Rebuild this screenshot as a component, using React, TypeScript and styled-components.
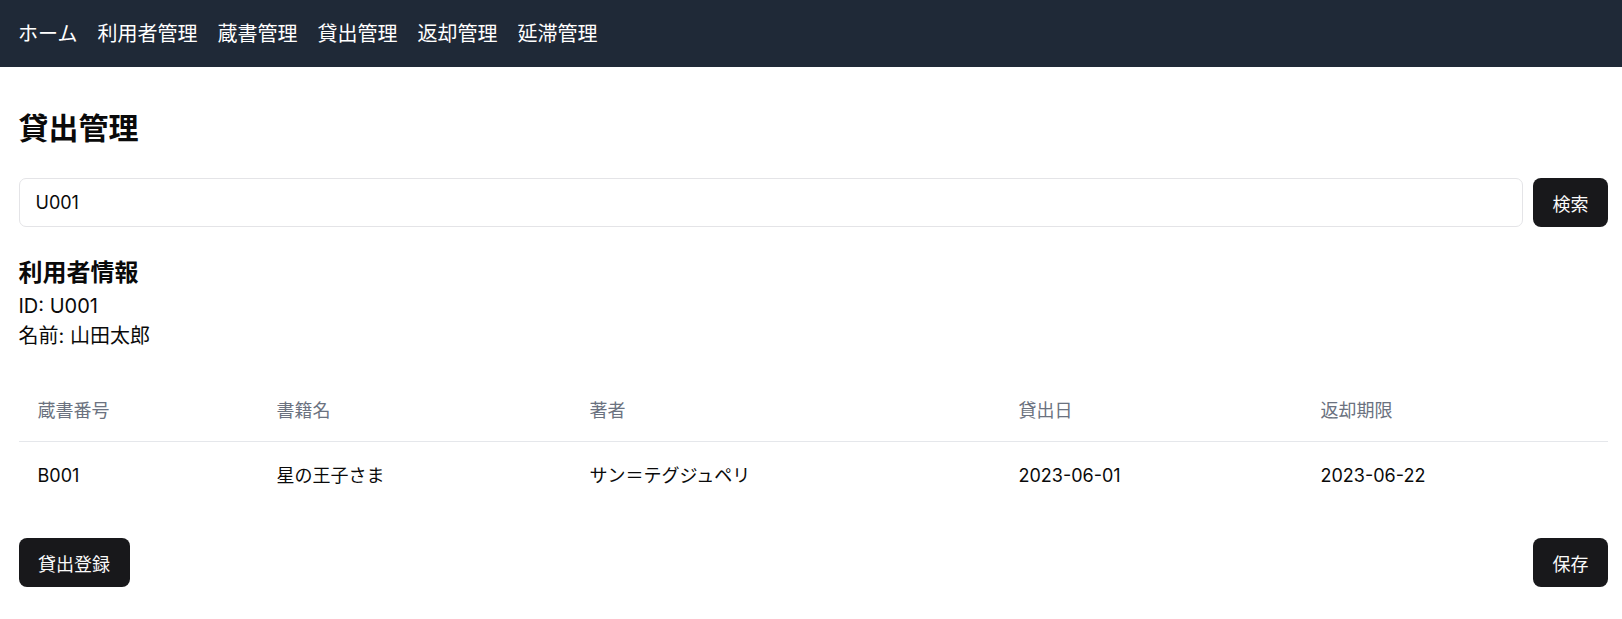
import React from "react";
import styled, { createGlobalStyle } from "styled-components";

const GlobalStyle = createGlobalStyle`
  * { box-sizing: border-box; }
  html, body { margin: 0; padding: 0; background: #ffffff; }
  body {
    font-family: Inter, "Noto Sans CJK JP", "Noto Sans", sans-serif;
    color: #0a0a0a;
    font-size: 18px;
  }
`;

const Header = styled.header`
  height: 67px;
  background: #1f2937;
  display: flex;
  align-items: center;
  padding: 0 14px 0 18px;
`;

const Nav = styled.nav`
  display: flex;
  gap: 20px;
`;

const NavLink = styled.a`
  color: #ffffff;
  font-size: 20px;
  line-height: 28px;
  text-decoration: none;
  cursor: pointer;
`;

const Main = styled.main`
  padding: 43px 14px 30px 18.5px;
  display: flex;
  flex-direction: column;
`;

const Title = styled.h1`
  margin: 0;
  font-size: 30px;
  line-height: 36px;
  font-weight: 700;
`;

const SearchRow = styled.div`
  margin-top: 32px;
  display: flex;
  gap: 10px;
`;

const Input = styled.input`
  flex: 1;
  height: 49px;
  border: 1px solid #e4e4e7;
  border-radius: 7px;
  padding: 0 16px;
  font-family: inherit;
  font-size: 18px;
  color: #0a0a0a;
  outline: none;
  background: #fff;
`;

const Button = styled.button`
  height: 49px;
  padding: 0 19.5px;
  border: none;
  border-radius: 8px;
  background: #18181b;
  color: #fafafa;
  font-family: inherit;
  font-size: 18px;
  cursor: pointer;
  white-space: nowrap;
`;

const Section = styled.section`
  margin-top: 28px;
`;

const SubTitle = styled.h2`
  margin: 0;
  font-size: 24px;
  line-height: 36px;
  font-weight: 700;
`;

const InfoLine = styled.p`
  margin: 0;
  font-size: 20px;
  line-height: 30px;
`;

const Table = styled.table`
  margin-top: 30px;
  width: 100%;
  border-collapse: collapse;
  table-layout: fixed;
`;

const Th = styled.th`
  text-align: left;
  font-weight: 400;
  color: #6b7280;
  font-size: 18px;
  line-height: 30px;
  padding: 15px 19px;
  border-bottom: 1px solid #e5e7eb;
`;

const Td = styled.td`
  font-size: 18px;
  line-height: 30px;
  padding: 19px 19px;
  color: #0a0a0a;
`;

const Actions = styled.div`
  margin-top: 28px;
  display: flex;
  justify-content: space-between;
`;

const navItems = ["ホーム", "利用者管理", "蔵書管理", "貸出管理", "返却管理", "延滞管理"];

const columns = [
  { label: "蔵書番号", width: 239 },
  { label: "書籍名", width: 313 },
  { label: "著者", width: 429 },
  { label: "貸出日", width: 302 },
  { label: "返却期限", width: undefined as number | undefined },
];

const loans = [
  {
    id: "B001",
    title: "星の王子さま",
    author: "サン＝テグジュペリ",
    loanDate: "2023-06-01",
    dueDate: "2023-06-22",
  },
];

export default function App() {
  return (
    <>
      <GlobalStyle />
      <Header>
        <Nav>
          {navItems.map((n) => (
            <NavLink key={n}>{n}</NavLink>
          ))}
        </Nav>
      </Header>
      <Main>
        <Title>貸出管理</Title>
        <SearchRow>
          <Input defaultValue="U001" />
          <Button>検索</Button>
        </SearchRow>
        <Section>
          <SubTitle>利用者情報</SubTitle>
          <InfoLine>ID: U001</InfoLine>
          <InfoLine>名前: 山田太郎</InfoLine>
        </Section>
        <Table>
          <colgroup>
            {columns.map((c) => (
              <col key={c.label} style={c.width ? { width: c.width } : undefined} />
            ))}
          </colgroup>
          <thead>
            <tr>
              {columns.map((c) => (
                <Th key={c.label}>{c.label}</Th>
              ))}
            </tr>
          </thead>
          <tbody>
            {loans.map((l) => (
              <tr key={l.id}>
                <Td>{l.id}</Td>
                <Td>{l.title}</Td>
                <Td>{l.author}</Td>
                <Td>{l.loanDate}</Td>
                <Td>{l.dueDate}</Td>
              </tr>
            ))}
          </tbody>
        </Table>
        <Actions>
          <Button>貸出登録</Button>
          <Button>保存</Button>
        </Actions>
      </Main>
    </>
  );
}
